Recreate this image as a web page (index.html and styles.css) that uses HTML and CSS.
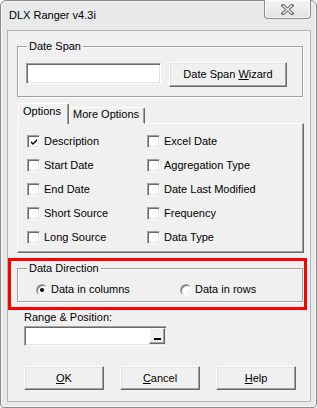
FILE: index.html
```html
<!DOCTYPE html>
<html lang="en">
<head>
  <meta charset="UTF-8" />
  <title>DLX Ranger v4.3i</title>
  <link rel="stylesheet" href="styles.css">
</head>
<body>
  <div class="window">
    <div class="titlebar">
      <span class="title">DLX Ranger v4.3i</span>
      <div class="close-btn">
        <svg width="13" height="11" viewBox="0 0 13 11">
          <path d="M2 1.5 L11 9.5 M11 1.5 L2 9.5" stroke="#6f6f6f" stroke-width="3.4" stroke-linecap="square"/>
          <path d="M2 1.5 L11 9.5 M11 1.5 L2 9.5" stroke="#f4f4f4" stroke-width="1.2" stroke-linecap="butt"/>
        </svg>
      </div>
    </div>

    <div class="client">
      <!-- date span section -->
      <div class="group date-group">
        <div class="group-title">Date Span</div>
        <div class="date-row">
          <div class="textbox date-input"></div>
          <div class="btn wizard-btn"><span>Date Span <u>W</u>izard</span></div>
        </div>
      </div>

      <!-- tab strip + options -->
      <div class="tabs">
        <div class="tab active">Options</div>
        <div class="tab">More Options</div>
      </div>
      <div class="tab-panel">
        <label class="check"><span class="box checked"><svg width="7" height="7" viewBox="0 0 7 7"><path d="M0 2 L2 4 L6 0 L6 2 L2 6 L0 4 Z" fill="#000"/></svg></span>Description</label>
        <label class="check"><span class="box"></span>Excel Date</label>
        <label class="check"><span class="box"></span>Start Date</label>
        <label class="check"><span class="box"></span>Aggregation Type</label>
        <label class="check"><span class="box"></span>End Date</label>
        <label class="check"><span class="box"></span>Date Last Modified</label>
        <label class="check"><span class="box"></span>Short Source</label>
        <label class="check"><span class="box"></span>Frequency</label>
        <label class="check"><span class="box"></span>Long Source</label>
        <label class="check"><span class="box"></span>Data Type</label>
      </div>

      <!-- data direction, highlighted -->
      <div class="highlight">
        <div class="group direction-group">
          <div class="group-title">Data Direction</div>
          <div class="radio-row">
            <label class="radio"><span class="dot selected"></span>Data in columns</label>
            <label class="radio"><span class="dot"></span>Data in rows</label>
          </div>
        </div>
      </div>

      <div class="range-label">Range &amp; Position:</div>
      <div class="textbox range-input">
        <div class="ref-btn"><span></span></div>
      </div>

      <div class="button-row">
        <div class="btn action-btn"><span><u>O</u>K</span></div>
        <div class="btn action-btn"><span><u>C</u>ancel</span></div>
        <div class="btn action-btn"><span><u>H</u>elp</span></div>
      </div>
    </div>
  </div>
</body>
</html>
```

FILE: styles.css
```css
body {
  margin: 0;
  background: #ffffff;
  font-family: "Liberation Sans", Arial, sans-serif;
  font-size: 11px;
  line-height: 13px;
  color: #000;
}

/* window frame */
.window {
  width: 317px;
  height: 408px;
  box-sizing: border-box;
  border: 1px solid #8a8a8a;
  border-radius: 6px 6px 4px 4px;
  background: #e8e9ea;
  box-shadow: inset 0 0 0 1px #f7f7f7;
}

.titlebar {
  height: 29px;
  display: flex;
  justify-content: space-between;
  align-items: flex-start;
  padding-left: 8px;
}

.title {
  align-self: center;
  font-size: 11px;
}

.close-btn {
  width: 47px;
  height: 19px;
  box-sizing: border-box;
  margin: -1px 5px 0 0;
  border: 1px solid #8d8d8d;
  border-top: none;
  border-radius: 0 0 4px 4px;
  background: linear-gradient(#f4f4f4, #e2e2e2);
  box-shadow: inset 0 0 0 1px rgba(255, 255, 255, 0.7);
  display: flex;
  align-items: center;
  justify-content: center;
}

/* client area */
.client {
  width: 304px;
  height: 372px;
  box-sizing: border-box;
  margin-left: 6px;
  border: 1px solid #b4b4b4;
  background: #f0f0f0;
}

/* etched group boxes */
.group {
  width: 286px;
  box-sizing: border-box;
  border: 1px solid #a0a0a0;
  box-shadow: inset 1px 1px 0 #fff, 1px 1px 0 #fff;
}

.group-title {
  width: fit-content;
  margin: -7px 0 0 9px;
  padding: 0 2px;
  background: #f0f0f0;
}

.date-group {
  margin: 15px 0 0 9px;
  padding-bottom: 9px;
}

.date-row {
  display: flex;
  align-items: flex-start;
  gap: 8px;
  margin-top: 9px;
  padding-left: 8px;
}

/* sunken text fields */
.textbox {
  box-sizing: border-box;
  background: #fff;
  border: 1px solid;
  border-color: #a0a0a0 #fff #fff #a0a0a0;
  box-shadow: inset 1px 1px 0 #696969, inset -1px -1px 0 #e3e3e3;
}

.date-input {
  width: 135px;
  height: 21px;
  margin-top: 1px;
}

/* raised buttons */
.btn {
  box-sizing: border-box;
  background: #f0f0f0;
  border: 1px solid;
  border-color: #fff #696969 #696969 #fff;
  box-shadow: inset -1px -1px 0 #a0a0a0, inset 1px 1px 0 #e3e3e3;
  display: flex;
  align-items: center;
  justify-content: center;
}

.wizard-btn {
  width: 118px;
  height: 25px;
}

/* tabs */
.tabs {
  display: flex;
  align-items: flex-end;
  margin: 6px 0 -1px 10px;
}

.tab {
  box-sizing: border-box;
  background: #f0f0f0;
  border: 1px solid;
  border-color: #fff #696969 transparent #fff;
  box-shadow: inset -1px 0 0 #a0a0a0;
  height: 17px;
  width: 76px;
  padding-left: 3px;
  border-radius: 2px 2px 0 0;
}

.tab.active {
  position: relative;
  z-index: 1;
  width: 51px;
  height: 21px;
  padding: 1px 0 0 4px;
  border-bottom: none;
}

.tab-panel {
  width: 287px;
  box-sizing: border-box;
  margin-left: 9px;
  border: 1px solid;
  border-color: #fff #696969 #696969 #fff;
  box-shadow: inset -1px -1px 0 #a0a0a0;
  padding: 11px 0 8px 9px;
  display: grid;
  grid-template-columns: 120px 1fr;
  row-gap: 11px;
}

.check {
  display: flex;
  align-items: center;
  gap: 4px;
  height: 13px;
}

.box {
  width: 13px;
  height: 13px;
  box-sizing: border-box;
  background: #fff;
  border: 1px solid;
  border-color: #a0a0a0 #fff #fff #a0a0a0;
  box-shadow: inset 1px 1px 0 #696969, inset -1px -1px 0 #e3e3e3;
  display: flex;
  align-items: center;
  justify-content: center;
}

.box svg {
  margin: 1px 0 0 1px;
}

/* highlighted data direction block */
.highlight {
  width: 299px;
  box-sizing: border-box;
  margin-top: 5px;
  border: 3px solid #ff0000;
  padding: 7px 0 5px 6px;
}

.direction-group {
  padding-bottom: 5px;
}

.radio-row {
  display: grid;
  grid-template-columns: 144px auto;
  margin-top: 8px;
  padding-left: 18px;
}

.radio {
  display: flex;
  align-items: center;
  gap: 3px;
  height: 13px;
}

.dot {
  width: 12px;
  height: 12px;
  box-sizing: border-box;
  border-radius: 50%;
  background: #fff;
  border: 1px solid;
  border-color: #a0a0a0 #fff #fff #a0a0a0;
  box-shadow: inset 1px 1px 0 #696969, inset -1px -1px 0 #e3e3e3;
  display: flex;
  align-items: center;
  justify-content: center;
}

.dot.selected::after {
  content: "";
  width: 4px;
  height: 4px;
  border-radius: 50%;
  background: #000;
}

/* range input */
.range-label {
  margin: 1px 0 0 16px;
}

.range-input {
  width: 143px;
  height: 20px;
  margin: 2px 0 0 16px;
  display: flex;
  justify-content: flex-end;
  align-items: center;
  padding-right: 1px;
}

.ref-btn {
  width: 16px;
  height: 16px;
  box-sizing: border-box;
  background: #f0f0f0;
  border: 1px solid;
  border-color: #fff #696969 #696969 #fff;
  box-shadow: inset -1px -1px 0 #a0a0a0;
  display: flex;
  justify-content: center;
  align-items: flex-end;
  padding-bottom: 3px;
}

.ref-btn span {
  width: 7px;
  height: 2px;
  background: #000;
}

/* bottom buttons */
.button-row {
  display: flex;
  gap: 16px;
  margin-top: 20px;
  padding-left: 16px;
}

.action-btn {
  width: 80px;
  height: 24px;
}
```
